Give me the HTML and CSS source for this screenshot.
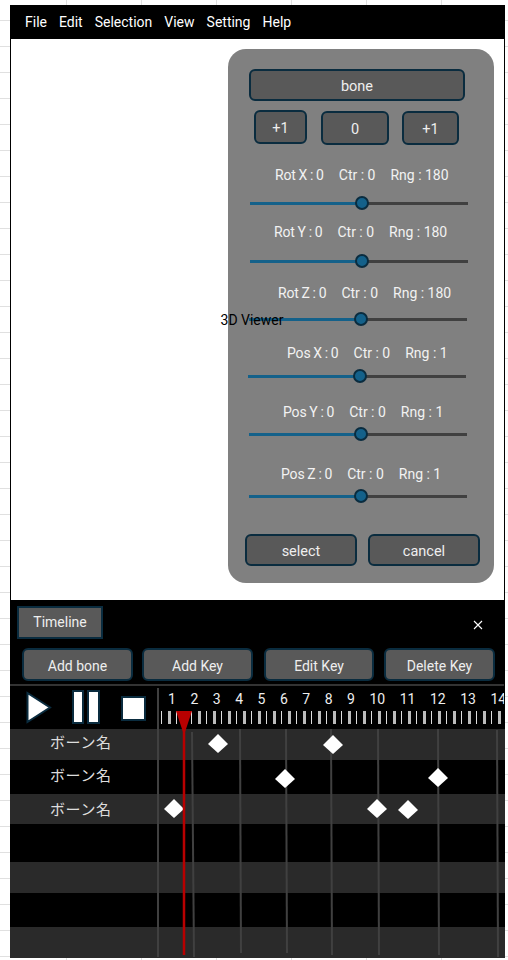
FILE: index.html
```html
<!DOCTYPE html>
<html lang="ja">
<head>
  <meta charset="UTF-8" />
  <title>Bone Editor</title>
  <link rel="stylesheet" href="styles.css">
</head>
<body>
  <div class="app">
    <nav class="menu">
      <span>File</span><span>Edit</span><span>Selection</span><span>View</span><span>Setting</span><span>Help</span>
    </nav>

    <main class="viewer">
      <span class="viewer-label">3D Viewer</span>

      <section class="panel">
        <button class="btn btn-name">bone</button>
        <div class="counter">
          <button class="btn btn-step-a">+1</button>
          <button class="btn btn-value">0</button>
          <button class="btn btn-step-b">+1</button>
        </div>

        <div class="axis-label rot-x"><span>Rot X : 0</span><span>Ctr : 0</span><span>Rng : 180</span></div>
        <div class="slider rot-x"><i class="fill"></i><i class="thumb"></i></div>

        <div class="axis-label rot-y"><span>Rot Y : 0</span><span>Ctr : 0</span><span>Rng : 180</span></div>
        <div class="slider rot-y"><i class="fill"></i><i class="thumb"></i></div>

        <div class="axis-label rot-z"><span>Rot Z : 0</span><span>Ctr : 0</span><span>Rng : 180</span></div>
        <div class="slider rot-z"><i class="fill"></i><i class="thumb"></i></div>

        <div class="axis-label pos-x"><span>Pos X : 0</span><span>Ctr : 0</span><span>Rng : 1</span></div>
        <div class="slider pos-x"><i class="fill"></i><i class="thumb"></i></div>

        <div class="axis-label pos-y"><span>Pos Y : 0</span><span>Ctr : 0</span><span>Rng : 1</span></div>
        <div class="slider pos-y"><i class="fill"></i><i class="thumb"></i></div>

        <div class="axis-label pos-z"><span>Pos Z : 0</span><span>Ctr : 0</span><span>Rng : 1</span></div>
        <div class="slider pos-z"><i class="fill"></i><i class="thumb"></i></div>

        <div class="panel-actions">
          <button class="btn">select</button>
          <button class="btn">cancel</button>
        </div>
      </section>
    </main>

    <section class="timeline">
      <header class="timeline-head">
        <div class="tab">Timeline</div>
        <svg class="close" width="10" height="10" viewBox="0 0 10 10"><path d="M1 1 L9 9 M9 1 L1 9" stroke="#fff" stroke-width="1.1"/></svg>
      </header>

      <div class="actions">
        <button class="btn">Add bone</button>
        <button class="btn">Add Key</button>
        <button class="btn btn-edit">Edit Key</button>
        <button class="btn btn-delete">Delete Key</button>
      </div>

      <div class="transport-row">
        <div class="transport">
          <svg class="icon-play" width="26" height="33" viewBox="0 0 26 33"><path d="M1.5 2 L24 16.5 L1.5 31 Z" fill="#fff" stroke="#0a2c3f" stroke-width="2"/></svg>
          <svg class="icon-pause" width="28" height="34" viewBox="0 0 28 34"><rect x="1" y="1" width="10" height="32" fill="#fff" stroke="#0a2c3f" stroke-width="2"/><rect x="16" y="1" width="11" height="32" fill="#fff" stroke="#0a2c3f" stroke-width="2"/></svg>
          <svg class="icon-stop" width="25" height="25" viewBox="0 0 25 25"><rect x="1" y="1" width="23" height="23" fill="#fff" stroke="#0a2c3f" stroke-width="2"/></svg>
        </div>
        <div class="ruler">
          <div class="numbers">
            <span>1</span><span>2</span><span>3</span><span>4</span><span>5</span><span>6</span><span>7</span><span>8</span><span>9</span><span>10</span><span>11</span><span>12</span><span>13</span><span>14</span>
          </div>
          <div class="ticks"></div>
        </div>
      </div>

      <div class="tracks">
        <div class="track track-1">ボーン名</div>
        <div class="track track-2">ボーン名</div>
        <div class="track track-3">ボーン名</div>
        <div class="track track-4"></div>
        <div class="track track-5"></div>
        <div class="track track-6"></div>
        <div class="track track-7"></div>
      </div>

      <!-- frame lines, keys and playhead, in timeline coordinates -->
      <svg class="overlay" width="495" height="358" viewBox="0 0 495 358">
        <g stroke="#404040" stroke-width="2" fill="none">
          <path d="M148 88 V357"/>
          <path d="M182 132 L184 357"/>
          <path d="M230 129 L231 353"/>
          <path d="M276 129 L277 353"/>
          <path d="M321 129 L322 355"/>
          <path d="M368 129 L369 355"/>
          <path d="M428 129 L429 355"/>
          <path d="M487 130 L488 357"/>
        </g>
        <g fill="#fff">
          <path d="M208 134 L218 144 L208 153 L198 144 Z"/>
          <path d="M323 135 L333 145 L323 154 L313 145 Z"/>
          <path d="M275 169 L285 179 L275 188 L265 179 Z"/>
          <path d="M428 168 L438 178 L428 187 L418 178 Z"/>
          <path d="M164 199 L174 209 L164 218 L154 209 Z"/>
          <path d="M367 199 L377 209 L367 218 L357 209 Z"/>
          <path d="M398 200 L408 210 L398 219 L388 210 Z"/>
        </g>
        <path d="M174 112 V355" stroke="#b80000" stroke-width="2.5"/>
        <path d="M166 111 H182 L175 132 H173 Z" fill="#b80000"/>
      </svg>
    </section>
  </div>
</body>
</html>
```
FILE: styles.css
```css
* {
  box-sizing: border-box;
}

body {
  margin: 0;
  padding: 5px 0 0 10px;
  height: 960px;
  overflow: hidden;
  font-family: Roboto, "Noto Sans CJK JP", sans-serif;
  background-color: #fff;
  background-image:
    repeating-linear-gradient(90deg, transparent 0 66px, #e0e0e0 66px 67px, transparent 67px 75px),
    repeating-linear-gradient(180deg, transparent 0 20px, #e0e0e0 20px 21px, transparent 21px 26px);
  background-size: 75px 26px;
}

.app {
  width: 495px;
  height: 953px;
  background: #000;
}

.menu {
  display: flex;
  gap: 12px;
  height: 34px;
  padding-left: 15px;
  align-items: center;
  color: #fff;
  font-size: 14px;
}

.viewer {
  position: relative;
  display: flex;
  align-items: center;
  justify-content: center;
  height: 561px;
  margin: 0 1px;
  padding-right: 11px;
  background: #fff;
}

.viewer-label {
  position: relative;
  z-index: 2;
  color: #000;
  font-size: 14px;
}

.btn {
  padding: 2px 0 0;
  border: 2px solid #0a2c3f;
  border-radius: 6px;
  background: #595959;
  color: #eee;
  font-family: inherit;
  font-size: 14.5px;
}

/* bone panel */
.panel {
  position: absolute;
  top: 10px;
  left: 217px;
  display: flex;
  flex-direction: column;
  align-items: flex-start;
  width: 266px;
  height: 534px;
  padding-top: 20px;
  border-radius: 18px;
  background: #808080;
}

.btn-name {
  width: 216px;
  height: 32px;
  margin-left: 21px;
}

.counter {
  display: flex;
  gap: 14px;
  margin: 9px 0 0 26px;
}

.counter .btn {
  height: 34px;
}

.btn-step-a {
  width: 53px;
}

.btn-value {
  width: 68px;
  margin-top: 1px;
}

.btn-step-b {
  width: 57px;
  margin-top: 1px;
  margin-left: -1px;
}

.axis-label {
  display: flex;
  gap: 15px;
  height: 20px;
  align-items: center;
  color: #f2f2f2;
  font-size: 14px;
  white-space: nowrap;
}

.axis-label span:first-child {
  letter-spacing: -0.15px;
  word-spacing: -0.5px;
}

.slider {
  position: relative;
  width: 218px;
  height: 12px;
}

.slider::before {
  content: "";
  position: absolute;
  left: 0;
  right: 0;
  top: 5px;
  height: 3px;
  background: #404040;
}

.fill {
  position: absolute;
  left: 0;
  top: 5px;
  width: 51%;
  height: 3px;
  background: #14618a;
}

.thumb {
  position: absolute;
  left: 105px;
  top: -1px;
  width: 14px;
  height: 14px;
  border: 2px solid #0a2c3f;
  border-radius: 50%;
  background: #14618a;
}

.axis-label.rot-x { margin: 20px 0 0 47px; }
.slider.rot-x { margin: 12px 0 0 22px; }
.axis-label.rot-y { margin: 13px 0 0 46px; }
.slider.rot-y { margin: 13px 0 0 22px; }
.axis-label.rot-z { margin: 16px 0 0 50px; }
.slider.rot-z { margin: 10px 0 0 21px; }
.axis-label.pos-x { margin: 18px 0 0 59px; }
.slider.pos-x { margin: 7px 0 0 20px; }
.axis-label.pos-y { margin: 20px 0 0 55px; }
.slider.pos-y { margin: 6px 0 0 21px; }
.axis-label.pos-z { margin: 24px 0 0 53px; }
.slider.pos-z { margin: 6px 0 0 21px; }

.panel-actions {
  display: flex;
  gap: 11px;
  margin: 32px 0 0 17px;
}

.panel-actions .btn {
  width: 112px;
  height: 32px;
}

/* timeline */
.timeline {
  position: relative;
  height: 358px;
  overflow: hidden;
}

.timeline-head {
  display: flex;
  justify-content: space-between;
  height: 48px;
  padding: 6px 22px 0 7px;
}

.tab {
  width: 86px;
  height: 33px;
  border: 2px solid #0a2c3f;
  background: #595959;
  color: #eee;
  font-size: 14px;
  line-height: 29px;
  text-align: center;
}

.close {
  margin-top: 14px;
}

.actions {
  display: flex;
  gap: 9px;
  padding-left: 12px;
}

.actions .btn {
  width: 111px;
  height: 33px;
  font-size: 14px;
}

.actions .btn-edit {
  width: 110px;
  margin-left: 2px;
}

.actions .btn-delete {
  margin-left: 1px;
}

.transport-row {
  display: flex;
  height: 45px;
  margin: 3px 1px 0 0;
  border-top: 2px solid #333;
}

.transport {
  display: flex;
  flex: none;
  width: 150px;
  padding-left: 16px;
  gap: 21px;
  align-items: flex-start;
}

.icon-play {
  margin-top: 5px;
}

.icon-pause {
  margin: 4px 0 0 -1px;
}

.icon-stop {
  margin-top: 10px;
}

.ruler {
  flex: 1;
  overflow: hidden;
}

.numbers {
  display: flex;
  gap: 14.5px;
  height: 25px;
  padding: 3px 0 0 8px;
  color: #eee;
  font-size: 14px;
  line-height: 20px;
  white-space: nowrap;
}

.ticks {
  height: 13px;
  margin-left: 1px;
  background: repeating-linear-gradient(90deg, #ddd 0 1.5px, transparent 1.5px 7.5px, #bbb 7.5px 10px, transparent 10px 15px);
}

.track {
  padding-left: 40px;
  color: #ddd;
  font-size: 15px;
  letter-spacing: 0.6px;
  line-height: 28px;
}

.track-2, .track-3 {
  line-height: 32px;
}

.track-1, .track-3, .track-5, .track-7 {
  background: #2a2a2a;
}

.track-1 { height: 31px; }
.track-2 { height: 34px; }
.track-3 { height: 30px; }
.track-4 { height: 38px; }
.track-5 { height: 31px; }
.track-6 { height: 34px; }
.track-7 { height: 31px; }

.overlay {
  position: absolute;
  top: 0;
  left: 0;
}
```
